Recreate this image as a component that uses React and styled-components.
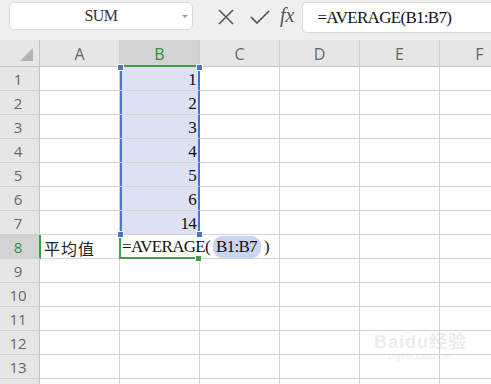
import { Fragment } from 'react'
import styled, { createGlobalStyle } from 'styled-components'

const GlobalStyle = createGlobalStyle`
  html, body {
    margin: 0;
    padding: 0;
    background: #efefef;
    overflow: hidden;
  }
`

const Page = styled.div`
  position: relative;
  width: 491px;
  height: 384px;
  overflow: hidden;
  background: #efefef;
  font-family: "Liberation Sans", Arial, sans-serif;
`

const Toolbar = styled.div`
  height: 40px;
  display: flex;
  align-items: flex-start;
  padding-top: 2px;
  box-sizing: border-box;
  background: #efefef;
`

const NameBox = styled.div`
  position: relative;
  margin-left: 9px;
  width: 184px;
  height: 28px;
  box-sizing: border-box;
  background: #fff;
  border: 1px solid #dadada;
  border-radius: 5px;
  display: flex;
  align-items: center;
  justify-content: center;
  font-family: "Liberation Serif", "Times New Roman", serif;
  font-size: 16px;
  letter-spacing: -0.5px;
  color: #333;
`

const Caret = styled.span`
  position: absolute;
  right: 4px;
  top: 12px;
  width: 0;
  height: 0;
  border-left: 3px solid transparent;
  border-right: 3px solid transparent;
  border-top: 3px solid #9a9a9a;
`

const IconGroup = styled.div`
  display: flex;
  align-items: center;
  height: 30px;
  margin-left: 24px;
  gap: 15px;
  color: #555;
`

const Fx = styled.span`
  font-family: "Liberation Serif", "Times New Roman", serif;
  font-style: italic;
  font-size: 20px;
  color: #555;
  margin-left: -5px;
  margin-top: -4px;
`

const FormulaBox = styled.div`
  flex: 1;
  margin-left: 8px;
  height: 31px;
  box-sizing: border-box;
  background: #fff;
  border: 1px solid #dadada;
  border-right: none;
  border-radius: 5px 0 0 5px;
  display: flex;
  align-items: center;
  padding-left: 14px;
  font-family: "Liberation Serif", "Times New Roman", serif;
  font-size: 17px;
  letter-spacing: -0.7px;
  color: #111;
`

const Sheet = styled.div`
  display: grid;
  grid-template-columns: 40px repeat(6, 80px);
  grid-template-rows: 27px repeat(14, 24px);
  background: #fff;
`

const Corner = styled.div`
  position: relative;
  background: #e6e6e6;
  border-right: 1px solid #c4c4c4;
  border-bottom: 1px solid #c4c4c4;
  &::after {
    content: '';
    position: absolute;
    right: 6px;
    bottom: 5px;
    width: 13px;
    height: 13px;
    background: #b3b3b3;
    clip-path: polygon(100% 0, 100% 100%, 0 100%);
  }
`

const ColHead = styled.div`
  display: flex;
  align-items: center;
  justify-content: center;
  background: ${p => (p.$active ? '#d3d3d3' : '#e6e6e6')};
  border-right: 1px solid #d0d0d0;
  border-bottom: ${p => (p.$active ? '2px solid #3ea043' : '1px solid #c4c4c4')};
  color: ${p => (p.$active ? '#2f8f3f' : '#666')};
  font-family: "Open Sans", "Noto Sans", sans-serif;
  font-size: 16px;
  padding-top: 2px;
`

const RowHead = styled.div`
  display: flex;
  align-items: center;
  justify-content: center;
  background: ${p => (p.$active ? '#d3d3d3' : '#e6e6e6')};
  border-right: ${p => (p.$active ? '2px solid #3ea043' : '1px solid #c4c4c4')};
  margin-right: ${p => (p.$active ? '-1px' : '0')};
  border-bottom: 1px solid #d0d0d0;
  color: ${p => (p.$active ? '#2f8f3f' : '#666')};
  font-family: "Open Sans", "Noto Sans", sans-serif;
  font-size: 15px;
  padding-right: 3px;
  z-index: ${p => (p.$active ? 2 : 0)};
`

const blue = '#4a72cf'

const Cell = styled.div`
  position: relative;
  display: flex;
  align-items: center;
  justify-content: ${p => (p.$num ? 'flex-end' : 'flex-start')};
  padding: 2px 3px 0 4px;
  background: ${p => (p.$sel ? '#dce2f4' : '#fff')};
  border-right: 1px solid ${p => (p.$sel ? blue : '#d4d4d4')};
  border-bottom: 1px solid #d4d4d4;
  box-shadow: ${p => (p.$sel ? `inset 2px 0 0 ${blue}, inset -1px 0 0 ${blue}` : 'none')};
  font-family: "Liberation Serif", "Times New Roman", "Noto Sans CJK SC", serif;
  font-size: 17px;
  letter-spacing: -0.7px;
  color: #111;
  white-space: nowrap;
`

const ActiveCell = styled(Cell)`
  z-index: 1;
  overflow: visible;
  border-right-color: transparent;
  border-bottom: 2px solid #3ea043;
  margin-left: -1px;
  border-left: 2px solid #3ea043;
  padding-left: 1px;
`

const CjkText = styled.span`
  font-family: "Noto Sans CJK SC", "Noto Sans CJK JP", sans-serif;
  font-size: 16px;
  color: #222;
  letter-spacing: 1px;
`

const RangeRef = styled.span`
  background: #c8d4f0;
  border-radius: 9px;
  padding: 1px 4px 1px 3px;
  margin: 0 3px 0 3px;
`

const Handle = styled.span`
  position: absolute;
  width: 5px;
  height: 5px;
  background: ${p => p.$color || blue};
  border: 1px solid #fff;
  box-sizing: content-box;
  ${p => (p.$top ? 'top: -3px;' : 'bottom: -4px;')}
  ${p => (p.$left ? 'left: -3px;' : 'right: -4px;')}
  z-index: 3;
`

const Watermark = styled.div`
  position: absolute;
  left: 374px;
  top: 332px;
  display: flex;
  flex-direction: column;
  align-items: center;
  color: rgba(190, 190, 190, 0.3);
  pointer-events: none;
`

const WatermarkMain = styled.span`
  font-family: "Liberation Sans", "Noto Sans CJK SC", sans-serif;
  font-size: 18px;
  font-weight: bold;
  letter-spacing: 1px;
  line-height: 20px;
`

const WatermarkSub = styled.span`
  font-family: "Liberation Sans", sans-serif;
  font-size: 8px;
  line-height: 10px;
`

const XIcon = () => (
  <svg width="18" height="18" viewBox="0 0 18 18" fill="none" stroke="#555" strokeWidth="1.6">
    <path d="M2 2 L16 16 M16 2 L2 16" />
  </svg>
)

const CheckIcon = () => (
  <svg width="20" height="16" viewBox="0 0 20 16" fill="none" stroke="#555" strokeWidth="1.7">
    <path d="M1 8 L7 14 L19 2" />
  </svg>
)

const cols = ['A', 'B', 'C', 'D', 'E', 'F']
const values = [1, 2, 3, 4, 5, 6, 14]

const App = () => {
  const rows = Array.from({ length: 14 }, (_, i) => i + 1)
  return (
    <Page>
      <GlobalStyle />
      <Toolbar>
        <NameBox>
          SUM
          <Caret />
        </NameBox>
        <IconGroup>
          <XIcon />
          <CheckIcon />
          <Fx>fx</Fx>
        </IconGroup>
        <FormulaBox>=AVERAGE(B1:B7)</FormulaBox>
      </Toolbar>
      <Sheet>
        <Corner />
        {cols.map((c) => (
          <ColHead key={c} $active={c === 'B'}>{c}</ColHead>
        ))}
        {rows.map((r) => (
          <Fragment key={r}>
            <RowHead $active={r === 8}>{r === 14 ? '' : r}</RowHead>
            {cols.map((c) => {
              if (c === 'A' && r === 8) {
                return (
                  <Cell key={c}>
                    <CjkText>平均值</CjkText>
                  </Cell>
                )
              }
              if (c === 'B' && r <= 7) {
                return (
                  <Cell key={c} $sel $num>
                    {values[r - 1]}
                    {r === 1 && <Handle $top $left />}
                    {r === 1 && <Handle $top />}
                    {r === 7 && <Handle $left />}
                    {r === 7 && <Handle />}
                  </Cell>
                )
              }
              if (c === 'B' && r === 8) {
                return (
                  <ActiveCell key={c}>
                    =AVERAGE(<RangeRef>B1:B7</RangeRef>)
                    <Handle $color="#3ea043" style={{ right: '-3px', bottom: '-5px' }} />
                  </ActiveCell>
                )
              }
              return <Cell key={c} />
            })}
          </Fragment>
        ))}
      </Sheet>
      <Watermark>
        <WatermarkMain>Baidu经验</WatermarkMain>
        <WatermarkSub>jingyan.baidu.com</WatermarkSub>
      </Watermark>
    </Page>
  )
}

export default App
